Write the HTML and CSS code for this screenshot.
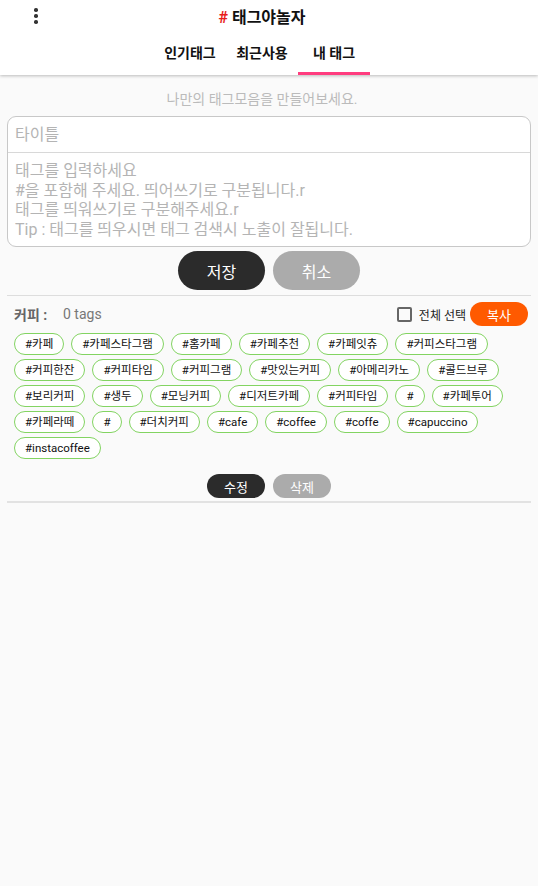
FILE: index.html
```html
<!DOCTYPE html>
<html lang="ko">
<head>
  <meta charset="UTF-8">
  <meta name="viewport" content="width=device-width, initial-scale=1.0">
  <title>태그야놀자</title>
  <link rel="stylesheet" href="styles.css">
</head>
<body>
  <div class="top-bar">
    <div class="title-row">
      <span class="menu-dots"><i></i><i></i><i></i></span>
      <h1 class="app-title"><span class="hash">#</span> 태그야놀자</h1>
    </div>
    <div class="tabs">
      <a class="tab" href="#">인기태그</a>
      <a class="tab" href="#">최근사용</a>
      <a class="tab active" href="#">내 태그</a>
    </div>
  </div>

  <p class="hint">나만의 태그모음을 만들어보세요.</p>

  <div class="editor">
    <input class="title-input" type="text" placeholder="타이틀">
    <textarea class="tag-input" placeholder="태그를 입력하세요&#10;#을 포함해 주세요. 띄어쓰기로 구분됩니다.r&#10;태그를 띄워쓰기로 구분해주세요.r&#10;Tip : 태그를 띄우시면 태그 검색시 노출이 잘됩니다."></textarea>
  </div>

  <div class="button-row">
    <button class="btn btn-dark">저장</button>
    <button class="btn btn-gray">취소</button>
  </div>

  <div class="group">
    <div class="group-head">
      <span class="group-name">커피 :</span>
      <span class="group-count">0 tags</span>
      <label class="select-all"><span class="checkbox"></span>전체 선택</label>
      <button class="copy-btn">복사</button>
    </div>
    <div class="chips">
      <span class="chip">#카페</span>
      <span class="chip">#카페스타그램</span>
      <span class="chip">#홈카페</span>
      <span class="chip">#카페추천</span>
      <span class="chip">#카페잇츄</span>
      <span class="chip">#커피스타그램</span>
      <span class="chip">#커피한잔</span>
      <span class="chip">#커피타임</span>
      <span class="chip">#커피그램</span>
      <span class="chip">#맛있는커피</span>
      <span class="chip">#아메리카노</span>
      <span class="chip">#콜드브루</span>
      <span class="chip">#보리커피</span>
      <span class="chip">#생두</span>
      <span class="chip">#모닝커피</span>
      <span class="chip">#디저트카페</span>
      <span class="chip">#커피타임</span>
      <span class="chip">#</span>
      <span class="chip">#카페투어</span>
      <span class="chip">#카페라떼</span>
      <span class="chip">#</span>
      <span class="chip">#더치커피</span>
      <span class="chip">#cafe</span>
      <span class="chip">#coffee</span>
      <span class="chip">#coffe</span>
      <span class="chip">#capuccino</span>
      <span class="chip">#instacoffee</span>
    </div>
    <div class="group-actions">
      <button class="btn-small btn-dark">수정</button>
      <button class="btn-small btn-gray">삭제</button>
    </div>
  </div>
</body>
</html>
```

FILE: styles.css
```css
body {
  font-family: Roboto, "Noto Sans CJK KR", sans-serif;
  margin: 0;
  padding: 0;
  background-color: #fafafa;
  color: #222;
}

.top-bar {
  background-color: #fff;
  height: 75px;
  box-shadow: 0 1px 3px rgba(0, 0, 0, 0.25);
  position: relative;
}

.title-row {
  height: 31px;
  display: flex;
  align-items: center;
  justify-content: center;
  padding-right: 14px;
  position: relative;
}

.menu-dots {
  position: absolute;
  left: 34px;
  top: 8px;
  display: flex;
  flex-direction: column;
  gap: 2.5px;
}

.menu-dots i {
  display: block;
  width: 3.5px;
  height: 3.5px;
  border-radius: 50%;
  background-color: #333;
}

.app-title {
  margin: 0;
  font-size: 16px;
  font-weight: bold;
  color: #111;
}

.app-title .hash {
  color: #e81c1c;
}

.tabs {
  display: flex;
  justify-content: center;
  padding-right: 14px;
  height: 44px;
}

.tab {
  width: 72px;
  display: flex;
  align-items: center;
  justify-content: center;
  font-size: 14px;
  font-weight: bold;
  color: #111;
  text-decoration: none;
  box-sizing: border-box;
  padding-bottom: 2px;
}

.tab.active {
  border-bottom: 3px solid #ff3d7f;
  padding-bottom: 0;
}

.hint {
  margin: 14px 0 0;
  padding-right: 14px;
  text-align: center;
  font-size: 14px;
  color: #bbb;
  line-height: 21px;
}

.editor {
  margin: 6px 7px 0;
  border: 1px solid #c8c8c8;
  border-radius: 9px;
  background-color: #fff;
  overflow: hidden;
}

.title-input,
.tag-input {
  display: block;
  width: 100%;
  box-sizing: border-box;
  border: none;
  outline: none;
  font-family: Roboto, "Noto Sans CJK KR", sans-serif;
  color: #333;
  background: transparent;
}

.title-input {
  height: 36px;
  padding: 0 7px;
  font-size: 16px;
  border-bottom: 1px solid #d8d8d8;
}

.tag-input {
  height: 93px;
  padding: 8px 7px 0;
  font-size: 16px;
  line-height: 19.5px;
  resize: none;
}

.title-input::placeholder,
.tag-input::placeholder {
  color: #b4b4b4;
}

.button-row {
  display: flex;
  justify-content: center;
  gap: 8px;
  margin-top: 4px;
}

.btn {
  width: 87px;
  height: 39px;
  border: none;
  border-radius: 20px;
  font-family: Roboto, "Noto Sans CJK KR", sans-serif;
  font-size: 16px;
  color: #fff;
}

.btn-dark {
  background-color: #2b2b2b;
}

.btn-gray {
  background-color: #ababab;
}

.group {
  margin: 5px 7px 0;
  border-top: 1px solid #ddd;
  border-bottom: 2px solid #e2e2e2;
}

.group-head {
  display: flex;
  align-items: center;
  height: 28px;
  margin-top: 4px;
  padding-left: 7px;
}

.group-name {
  font-size: 14px;
  font-weight: bold;
  color: #666;
  width: 49px;
}

.group-count {
  font-size: 14px;
  color: #777;
}

.select-all {
  margin-left: auto;
  display: flex;
  align-items: center;
  font-size: 12px;
  color: #222;
}

.checkbox {
  width: 11px;
  height: 11px;
  border: 2px solid #666;
  border-radius: 2px;
  margin-right: 7px;
}

.copy-btn {
  width: 58px;
  height: 24px;
  margin-left: 4px;
  margin-right: 3px;
  border: none;
  border-radius: 12px;
  background-color: #ff5a00;
  color: #fff;
  font-family: Roboto, "Noto Sans CJK KR", sans-serif;
  font-size: 13px;
}

.chips {
  display: flex;
  flex-wrap: wrap;
  gap: 4px 7px;
  padding: 5px 7px 0;
}

.chip {
  height: 22px;
  box-sizing: border-box;
  padding: 0 10px;
  border: 1px solid #83d462;
  border-radius: 11px;
  background-color: #fff;
  font-size: 11.5px;
  line-height: 20px;
  color: #111;
}

.group-actions {
  display: flex;
  justify-content: center;
  gap: 8px;
  margin: 15px 0 3px;
}

.btn-small {
  width: 58px;
  height: 24px;
  border: none;
  border-radius: 12px;
  font-family: Roboto, "Noto Sans CJK KR", sans-serif;
  font-size: 13px;
  color: #fff;
}
```
